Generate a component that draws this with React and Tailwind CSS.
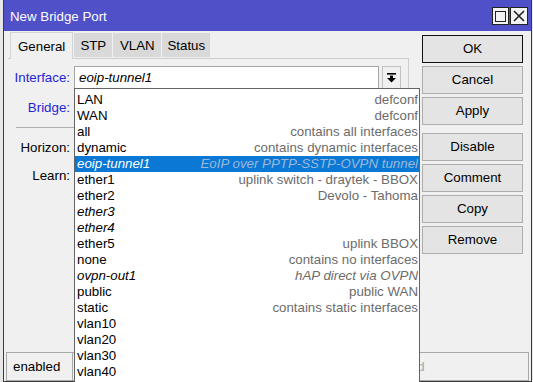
import React from 'react';

const items = [
  { name: 'LAN', note: 'defconf' },
  { name: 'WAN', note: 'defconf' },
  { name: 'all', note: 'contains all interfaces' },
  { name: 'dynamic', note: 'contains dynamic interfaces' },
  { name: 'eoip-tunnel1', note: 'EoIP over PPTP-SSTP-OVPN tunnel', italic: true, active: true },
  { name: 'ether1', note: 'uplink switch - draytek - BBOX' },
  { name: 'ether2', note: 'Devolo - Tahoma' },
  { name: 'ether3', note: '', italic: true },
  { name: 'ether4', note: '', italic: true },
  { name: 'ether5', note: 'uplink BBOX' },
  { name: 'none', note: 'contains no interfaces' },
  { name: 'ovpn-out1', note: 'hAP direct via OVPN', italic: true },
  { name: 'public', note: 'public WAN' },
  { name: 'static', note: 'contains static interfaces' },
  { name: 'vlan10' },
  { name: 'vlan20' },
  { name: 'vlan30' },
  { name: 'vlan40' },
];

const buttons = ['OK', 'Cancel', 'Apply', 'Disable', 'Comment', 'Copy', 'Remove'];

function DropArrow() {
  return (
    <svg width="9" height="10" viewBox="0 0 9 10">
      <rect x="0" y="0" width="9" height="1.6" fill="#000" />
      <rect x="3" y="2.6" width="3" height="2.4" fill="#000" />
      <polygon points="0,5 9,5 4.5,9.6" fill="#000" />
    </svg>
  );
}

export default function App() {
  return (
    <div className="relative w-[533px] h-[382px] overflow-hidden bg-[#e8e8e8] pl-[3px] font-['Liberation_Sans',Arial,sans-serif] text-[13.3px] text-black">
      <div className="w-[529px] h-[382px] border-x border-b border-[#3a3a3a] bg-[#f0f0f0] flex flex-col">
        {/* title bar */}
        <div className="h-[31px] bg-[#5050c8] flex items-center pl-[6px] pr-[3px] shrink-0">
          <span className="text-white text-[13.3px] flex-1 pt-[3px]">New Bridge Port</span>
          <div className="flex gap-[1px] mt-[1px]">
            <div className="w-[17px] h-[18px] bg-[#f4f4f4] border border-[#222] flex items-center justify-center">
              <div className="w-[11px] h-[11px] border border-[#222]" />
            </div>
            <div className="w-[18px] h-[18px] bg-[#f4f4f4] border border-[#222] flex items-center justify-center">
              <svg width="12" height="12" viewBox="0 0 12 12">
                <path d="M1 1 L11 11 M11 1 L1 11" stroke="#222" strokeWidth="1.6" />
              </svg>
            </div>
          </div>
        </div>

        <div className="flex h-[320px]">
          {/* left: tabs + panel */}
          <div className="w-[414px] flex flex-col">
            <div className="flex items-end pl-[6px] pt-[1px] h-[27px]">
              <div className="h-[27px] px-[7px] pt-[1px] bg-[#f0f0f0] border-x border-t border-[#d4d4d4] flex items-center relative z-10 -mb-[1px]">General</div>
              <div className="h-[24px] w-[38px] pt-[1px] bg-[#d9d9d9] flex items-center justify-center ml-[1px] mb-[1px]">STP</div>
              <div className="h-[24px] w-[48px] pt-[1px] bg-[#d9d9d9] flex items-center justify-center ml-[1px] mb-[1px]">VLAN</div>
              <div className="h-[24px] w-[48px] pt-[1px] bg-[#d9d9d9] flex items-center justify-center ml-[1px] mb-[1px]">Status</div>
            </div>
            <div className="ml-[4px] w-[401px] flex-1 border-t border-r border-[#cdcdcd] pt-[7px]">
              <div className="flex items-center h-[23px]">
                <div className="w-[62px] text-right text-[#2424d6]">Interface:</div>
                <div className="ml-[4px] w-[305px] h-[23px] bg-white border border-[#a6a6a6] flex items-center pl-[4px] italic">eoip-tunnel1</div>
                <div className="ml-[3px] w-[19px] h-[23px] bg-[#f0f0f0] border border-[#c2c2c2] flex items-center justify-center">
                  <DropArrow />
                </div>
              </div>
              <div className="flex items-center h-[23px] mt-[7px]">
                <div className="w-[62px] text-right text-[#2424d6]">Bridge:</div>
              </div>
              <div className="ml-[8px] mt-[8px] border-t border-[#b0b0b0]" />
              <div className="flex items-center h-[23px] mt-[8px]">
                <div className="w-[62px] text-right">Horizon:</div>
              </div>
              <div className="flex items-center h-[23px] mt-[5px]">
                <div className="w-[62px] text-right">Learn:</div>
              </div>
            </div>
          </div>

          {/* right: buttons */}
          <div className="ml-[4px] pt-[4px] flex flex-col">
            {buttons.map((b, i) => (
              <div
                key={b}
                className={
                  'w-[101px] h-[28px] flex items-center justify-center bg-[#e4e4e4] border ' +
                  (b === 'OK' ? 'border-[#111] ' : 'border-[#adadad] ') +
                  (i === 0 ? '' : b === 'Disable' ? 'mt-[8px]' : 'mt-[3px]')
                }
              >
                {b}
              </div>
            ))}
          </div>
        </div>

        {/* status bar */}
        <div className="flex h-[30px] pl-[2px] pr-[2px] pt-[1px]">
          <div className="w-[67px] h-[29px] border border-[#a8a8a8] flex items-center pl-[6px]">enabled</div>
          <div className="flex-1 h-[29px] border-y border-r border-[#a8a8a8]" />
          <div className="w-[158px] h-[29px] border-y border-r border-[#a8a8a8] flex items-center pl-[4px] text-[#a8a8a8]">disabled</div>
        </div>
      </div>

      {/* open dropdown list */}
      <div className="absolute left-[74px] top-[88px] w-[346px] h-[300px] bg-white border border-[#646464] pt-[3px] overflow-hidden">
        {items.map((it) => (
          <div
            key={it.name}
            className={
              'h-[16px] flex items-center whitespace-nowrap pl-[2px] pr-[1px] ' +
              (it.active ? 'bg-[#0a78d4] text-white' : '')
            }
          >
            <span className={it.italic ? 'italic' : ''}>{it.name}</span>
            <span
              className={
                'flex-1 text-right overflow-hidden ' +
                (it.active ? 'italic text-[#9db8d8]' : it.italic ? 'italic text-[#6c6c6c]' : 'text-[#6c6c6c]')
              }
            >
              {it.note}
            </span>
          </div>
        ))}
      </div>
    </div>
  );
}
